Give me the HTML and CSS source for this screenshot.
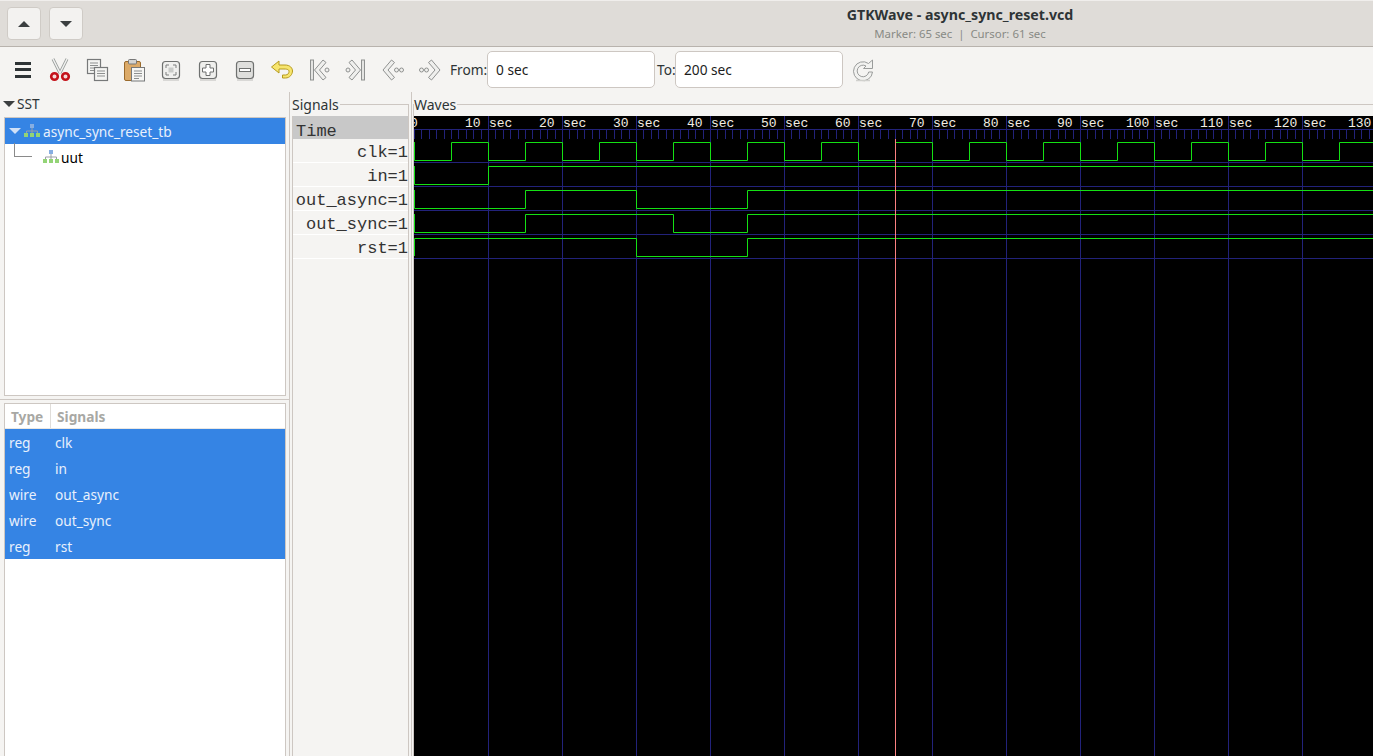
FILE: index.html
```html
<!DOCTYPE html>
<html lang="en">
<head>
  <meta charset="UTF-8" />
  <title>GTKWave - async_sync_reset.vcd</title>
  <link rel="stylesheet" href="styles.css">
</head>
<body>
  <header class="titlebar">
    <button class="nav-btn"><span class="tri-up"></span></button>
    <button class="nav-btn"><span class="tri-down"></span></button>
    <div class="title-block">
      <div class="title">GTKWave - async_sync_reset.vcd</div>
      <div class="subtitle">Marker: 65 sec &nbsp;|&nbsp; Cursor: 61 sec</div>
    </div>
  </header>

  <div class="toolbar">
    <div class="tool"><svg width="24" height="24" viewBox="0 0 24 24"><path d="M4 4h16v3H4zM4 10h16v3H4zM4 17h16v3H4z" fill="#2e3436"/></svg></div>
    <div class="tool"><svg width="24" height="24" viewBox="0 0 24 24"><path d="M5 1l7 14M19 1l-7 14" stroke="#9a9e9c" stroke-width="3" fill="none"/><path d="M5 1l7 14M19 1l-7 14" stroke="#f2f2f2" stroke-width="1.400" fill="none"/><circle cx="6.500" cy="18.500" r="3.300" fill="#f4dada" stroke="#c4121a" stroke-width="2.600"/><circle cx="17.500" cy="18.500" r="3.300" fill="#f4dada" stroke="#c4121a" stroke-width="2.600"/></svg></div>
    <div class="tool"><svg width="24" height="24" viewBox="0 0 24 24"><rect x="2.500" y="1.500" width="13" height="14" fill="#f4f4f2" stroke="#77797a" stroke-width="1.200"/><path d="M5 5h8M5 7.500h8M5 10h8M5 12.500h5" stroke="#8d8f8f"/><rect x="9.500" y="9.500" width="13" height="13" fill="#f4f4f2" stroke="#77797a" stroke-width="1.200"/><path d="M12 13h8M12 15.500h8M12 18h8" stroke="#8d8f8f"/></svg></div>
    <div class="tool"><svg width="24" height="24" viewBox="0 0 24 24"><rect x="2.500" y="3.500" width="16" height="19" rx="1.500" fill="#dcaa68" stroke="#9a6a2c"/><rect x="6.500" y="1.500" width="8" height="4.500" rx="1" fill="#d4d4d2" stroke="#777"/><rect x="9.500" y="9.500" width="13" height="13.500" fill="#f6f6f4" stroke="#77797a"/><path d="M12 13h8M12 15.500h8M12 18h8M12 20.500h5" stroke="#8d8f8f"/></svg></div>
    <div class="tool"><svg width="24" height="24" viewBox="0 0 24 24"><rect x="3.500" y="3.500" width="17" height="17" rx="3" fill="#f0f0ee" stroke="#6f7170" stroke-width="1.200"/><path d="M7 10V7h3M14 7h3v3M17 14v3h-3M10 17H7v-3" stroke="#7d7f7e" fill="none"/><rect x="9.500" y="9.500" width="5" height="5" fill="#c9cbc9"/><path d="M4 22h16" stroke="#cfcfcc" stroke-width="1.500"/></svg></div>
    <div class="tool"><svg width="24" height="24" viewBox="0 0 24 24"><rect x="3.500" y="3.500" width="17" height="17" rx="3" fill="#efefed" stroke="#6f7170" stroke-width="1.200"/><path d="M10 6.500h4V10h3.500v4H14v3.500h-4V14H6.500v-4H10z" fill="#fff" stroke="#6f7170"/><path d="M4 22h16" stroke="#cfcfcc" stroke-width="1.500"/></svg></div>
    <div class="tool"><svg width="24" height="24" viewBox="0 0 24 24"><rect x="3.500" y="3.500" width="17" height="17" rx="3" fill="#dfdfdd" stroke="#6f7170" stroke-width="1.200"/><rect x="6.500" y="10.500" width="11" height="3" fill="#fff" stroke="#6f7170"/><path d="M4 22h16" stroke="#cfcfcc" stroke-width="1.500"/></svg></div>
    <div class="tool"><svg width="24" height="24" viewBox="0 0 24 24"><path d="M1.500 9l7.500-6v4h6c5 0 7.500 3 7.500 6s-2.500 7-7 7h-3v-3h3c2.500 0 3.500-2 3.500-3.500S18 11 14 11H9v4z" fill="#f7e56e" stroke="#b59a1e" stroke-linejoin="round"/></svg></div>
    <div class="tool"><svg width="24" height="24" viewBox="0 0 24 24"><rect x="3.500" y="2" width="3" height="20" fill="#e4e4e2" stroke="#8f9190"/><path d="M16 2L7.500 12 16 22l3-2.500L12.500 12 19 4.500z" fill="#efefed" stroke="#8f9190"/><circle cx="20" cy="12" r="2" fill="#f0f0ee" stroke="#8f9190"/></svg></div>
    <div class="tool"><svg width="24" height="24" viewBox="0 0 24 24"><rect x="17.500" y="2" width="3" height="20" fill="#e4e4e2" stroke="#8f9190"/><path d="M8 2l8.500 10L8 22l-3-2.500 6.500-7.500L5 4.500z" fill="#efefed" stroke="#8f9190"/><circle cx="4" cy="12" r="2" fill="#f0f0ee" stroke="#8f9190"/></svg></div>
    <div class="tool"><svg width="24" height="24" viewBox="0 0 24 24"><path d="M10.500 2L2 12l8.500 10 3-2.500L7 12l6.500-7.500z" fill="#efefed" stroke="#8f9190"/><circle cx="15.500" cy="12" r="2" fill="#f0f0ee" stroke="#8f9190"/><circle cx="20.500" cy="12" r="2" fill="#f0f0ee" stroke="#8f9190"/></svg></div>
    <div class="tool"><svg width="24" height="24" viewBox="0 0 24 24"><path d="M13.500 2L22 12l-8.500 10-3-2.500L17 12l-6.500-7.500z" fill="#efefed" stroke="#8f9190"/><circle cx="8.500" cy="12" r="2" fill="#f0f0ee" stroke="#8f9190"/><circle cx="3.500" cy="12" r="2" fill="#f0f0ee" stroke="#8f9190"/></svg></div>
    <label class="range-label from-label">From:</label>
    <input class="range-input" value="0 sec">
    <label class="range-label to-label">To:</label>
    <input class="range-input" value="200 sec">
    <div class="tool reload"><svg width="24" height="24" viewBox="0 0 24 24"><path d="M17.500 5.500A9.500 9.500 0 1 0 21.500 14h-3.800a5.800 5.800 0 1 1-2.700-6L12.500 10.500h9V2z" fill="#f2f2f0" stroke="#9a9c9b"/><path d="M5 22.500h14" stroke="#d0d0cd" stroke-width="1.500"/></svg></div>
  </div>

  <main class="panes">
    <section class="left-pane">
      <div class="sst-head"><span class="tri-down"></span>SST</div>
      <div class="tree-box">
        <div class="tree-row selected">
          <span class="tri-down pale"></span>
          <svg class="hier" width="16" height="14" viewBox="0 0 16 14"><use href="#hier-icon"/></svg>
          <span>async_sync_reset_tb</span>
        </div>
        <div class="tree-row child">
          <span class="elbow"></span>
          <svg class="hier" width="16" height="14" viewBox="0 0 16 14"><use href="#hier-icon"/></svg>
          <span>uut</span>
        </div>
      </div>
      <div class="list-box">
        <div class="list-head">
          <div class="col-type">Type</div>
          <div class="col-name">Signals</div>
        </div>
        <div class="list-row"><div class="col-type">reg</div><div class="col-name">clk</div></div>
        <div class="list-row"><div class="col-type">reg</div><div class="col-name">in</div></div>
        <div class="list-row"><div class="col-type">wire</div><div class="col-name">out_async</div></div>
        <div class="list-row"><div class="col-type">wire</div><div class="col-name">out_sync</div></div>
        <div class="list-row"><div class="col-type">reg</div><div class="col-name">rst</div></div>
      </div>
    </section>

    <fieldset class="frame signals-frame">
      <legend>Signals</legend>
      <div class="sig-time">Time</div>
      <div class="sig-row">clk=1</div>
      <div class="sig-row">in=1</div>
      <div class="sig-row">out_async=1</div>
      <div class="sig-row">out_sync=1</div>
      <div class="sig-row">rst=1</div>
    </fieldset>

    <div class="waves-pane">
      <fieldset class="frame waves-frame">
        <legend>Waves</legend>
        <svg class="wave-canvas" width="959" height="640" viewBox="414 116 959 640">
          <defs>
            <pattern id="ticks" x="414" y="129" width="74" height="10" patternUnits="userSpaceOnUse">
              <path d="M.5 0v10M7.500 0v10M15.500 0v10M22.500 0v10M30.500 0v10M37.500 0v10M44.500 0v10M52.500 0v10M59.500 0v10M67.500 0v10" stroke="#22227a" fill="none" shape-rendering="crispEdges"/>
            </pattern>
            <symbol id="hier-icon" viewBox="0 0 16 14"><path d="M8 4v3M2.500 9V7h11v2M8 7v2" stroke="#9a9fa6" fill="none"/><rect x="6" y="0" width="4" height="4" fill="#86aee2"/><rect x="0" y="9" width="4" height="4" fill="#93d476"/><rect x="6" y="9" width="4" height="4" fill="#93d476"/><rect x="12" y="9" width="4" height="4" fill="#93d476"/></symbol>
          </defs>
          <rect x="414" y="116" width="959" height="640" fill="#000"/>
          <rect x="414" y="129" width="959" height="10" fill="url(#ticks)"/>
          <path class="grid" d="M488.500 116v640M562.500 116v640M636.500 116v640M710.500 116v640M784.500 116v640M858.500 116v640M932.500 116v640M1006.500 116v640M1080.500 116v640M1154.500 116v640M1228.500 116v640M1302.500 116v640"/>
          <path class="grid" d="M414 129.500h959M414 162.500h959M414 186.500h959M414 210.500h959M414 234.500h959M414 258.500h959"/>
          <g class="ruler">
            <text x="410" y="127">0</text>
            <text x="465" y="127">10</text><text x="489" y="127">sec</text>
            <text x="539" y="127">20</text><text x="563" y="127">sec</text>
            <text x="613" y="127">30</text><text x="637" y="127">sec</text>
            <text x="687" y="127">40</text><text x="711" y="127">sec</text>
            <text x="761" y="127">50</text><text x="785" y="127">sec</text>
            <text x="835" y="127">60</text><text x="859" y="127">sec</text>
            <text x="909" y="127">70</text><text x="933" y="127">sec</text>
            <text x="983" y="127">80</text><text x="1007" y="127">sec</text>
            <text x="1057" y="127">90</text><text x="1081" y="127">sec</text>
            <text x="1126" y="127">100</text><text x="1155" y="127">sec</text>
            <text x="1200" y="127">110</text><text x="1229" y="127">sec</text>
            <text x="1274" y="127">120</text><text x="1303" y="127">sec</text>
            <text x="1348" y="127">130</text>
          </g>
          <g class="trace">
            <path d="M414.500 142v18.500h37v-18h37v18h37v-18h37v18h37v-18h37v18h37v-18h37v18h37v-18h37v18h37v-18h37v18h37v-18h37v18h37v-18h37v18h37v-18h37v18h37v-18h37v18h37v-18h37v18h37v-18h37v18h37v-18h37"/>
            <path d="M414.500 166v18.500h74v-18h885"/>
            <path d="M414.500 190v18.500h111v-18h111v18h111v-18h626"/>
            <path d="M414.500 214v18.500h111v-18h148v18h74v-18h626"/>
            <path d="M414.500 256v-17.500h222v18h111v-18h626"/>
          </g>
          <path class="marker" d="M895.500 139v617"/>
        </svg>
      </fieldset>
    </div>
  </main>
</body>
</html>
```
FILE: styles.css
```css
html, body {
  margin: 0;
  height: 100%;
  overflow: hidden;
}
body {
  display: flex;
  flex-direction: column;
  background-color: #f5f4f2;
  color: #2e3436;
  font-family: "Noto Sans", sans-serif;
  font-size: 13.7px;
}

/* title bar */
.titlebar {
  display: flex;
  height: 47px;
  flex: none;
  gap: 8px;
  padding: 6px 0 0 7px;
  box-sizing: border-box;
  background-color: #dfdcd8;
  border-bottom: 1px solid #b8b3ad;
  border-top: 1px solid #f0eeec;
}
.nav-btn {
  width: 34px;
  height: 33px;
  padding: 0;
  display: flex;
  align-items: center;
  justify-content: center;
  background-color: #f3f2f0;
  border: 1px solid #cfcbc6;
  border-radius: 4px;
}
.tri-up, .tri-down {
  display: inline-block;
  width: 0;
  height: 0;
  border-left: 6px solid transparent;
  border-right: 6px solid transparent;
}
.tri-up { border-bottom: 6px solid #3b3f40; }
.tri-down { border-top: 6px solid #3b3f40; }
.title-block {
  position: absolute;
  left: 760px;
  width: 400px;
  top: 6px;
  text-align: center;
}
.title {
  font-weight: 700;
  font-size: 14.2px;
  line-height: 18px;
  color: #2e3436;
}
.subtitle {
  font-size: 11.4px;
  line-height: 20px;
  color: #888a85;
}

/* toolbar */
.toolbar {
  display: flex;
  align-items: center;
  flex: none;
  height: 45px;
  padding-left: 4px;
}
.tool {
  width: 37px;
  height: 24px;
  display: flex;
  justify-content: center;
}
.range-label {
  color: #2e3436;
  white-space: nowrap;
}
.from-label { width: 37px; margin-left: 2px; }
.to-label { width: 18px; margin-left: 2px; }
.range-input {
  width: 168px;
  height: 37px;
  box-sizing: border-box;
  padding: 0 8px;
  border: 1px solid #cdc7c2;
  border-radius: 5px;
  background-color: #fff;
  color: #1c1c1c;
  font-family: inherit;
  font-size: 13.7px;
}
.reload { margin-left: 1px; }

/* panes */
.panes {
  flex: 1;
  display: flex;
  min-height: 0;
}
.left-pane {
  width: 290px;
  flex: none;
  display: flex;
  flex-direction: column;
  padding-left: 4px;
  box-sizing: border-box;
  border-right: 1px solid #cdc7c2;
}
.sst-head {
  height: 25px;
  flex: none;
  display: flex;
  align-items: center;
  gap: 2px;
  box-sizing: border-box;
  padding-bottom: 2px;
  margin-left: -1px;
  color: #2e3436;
}
.tree-box, .list-box {
  width: 282px;
  box-sizing: border-box;
  background-color: #fff;
  border: 1px solid #cdc7c2;
}
.tree-box {
  height: 279px;
  flex: none;
  margin-bottom: 7px;
  position: relative;
}
/* divider between the two boxes */
.tree-box::after {
  content: "";
  position: absolute;
  left: -5px;
  right: -4px;
  bottom: -5px;
  border-bottom: 1px solid #cdc7c2;
}
.list-box { flex: 1; border-bottom: 0; }
.tree-row {
  display: flex;
  align-items: center;
  height: 26px;
  color: #000;
}
.tree-row.selected {
  background-color: #3584e4;
  color: #e8f0fc;
  padding-left: 4px;
  gap: 3px;
}
.tri-down.pale { border-top-color: #cfe0f7; }
.tree-row.child { padding-left: 9px; }
.hier { flex: none; }
.elbow {
  width: 18px;
  height: 14px;
  margin: -14px 11px 0 0;
  border-left: 1px solid #8a8a8a;
  border-bottom: 1px solid #8a8a8a;
  box-sizing: border-box;
}
.tree-row.child .hier { margin-right: 2px; }
.list-head {
  display: flex;
  height: 25px;
  line-height: 25px;
  font-weight: 700;
  color: #a8a8a4;
  box-sizing: border-box;
  border-bottom: 1px solid #e9e7e4;
}
.list-head .col-type {
  border-right: 1px solid #e0ddd9;
  box-sizing: border-box;
  padding-left: 6px;
  width: 46px;
}
.list-head .col-name { padding-left: 6px; }
.list-row {
  display: flex;
  height: 26px;
  line-height: 28px;
  background-color: #3584e4;
  color: #e8f0fc;
}
.list-row .col-type { width: 50px; padding-left: 4px; box-sizing: border-box; }

/* frames */
.frame {
  margin: 1px 0 0;
  padding: 0;
  min-width: 0;
  box-sizing: border-box;
  border: 1px solid #cdc7c2;
  border-bottom: 0;
}
.frame legend {
  padding: 0 1px 0 0;
  font-size: 14px;
  line-height: 24px;
  height: 23px;
  color: #2e3436;
}
.signals-frame {
  width: 117px;
  flex: none;
  margin-left: 2px;
}
.signals-frame legend { margin-left: -1px; }
.waves-pane {
  flex: 1;
  display: flex;
  min-width: 0;
  margin-left: 2px;
  padding-left: 1px;
  border-left: 1px solid #cdc7c2;
}
.waves-frame {
  flex: 1;
  min-width: 0;
  border-right: 0;
}
.sig-time, .sig-row {
  font-family: "Liberation Mono", monospace;
  font-size: 17px;
  color: #333;
}
.sig-time {
  height: 23px;
  line-height: 31px;
  padding-left: 3px;
  background-color: #c8c8c8;
}
.sig-row {
  height: 24px;
  line-height: 28px;
  text-align: right;
  box-sizing: border-box;
  border-bottom: 1px solid #fff;
}
.wave-canvas { display: block; }
.grid {
  fill: none;
  stroke: #22227a;
  shape-rendering: crispEdges;
}
.marker {
  fill: none;
  stroke: #fa8080;
  shape-rendering: crispEdges;
}
.ruler text {
  fill: #f4efe4;
  font-family: "Liberation Mono", monospace;
  font-size: 13px;
}
.trace path {
  fill: none;
  stroke: #14e014;
  stroke-width: 1;
}
```
